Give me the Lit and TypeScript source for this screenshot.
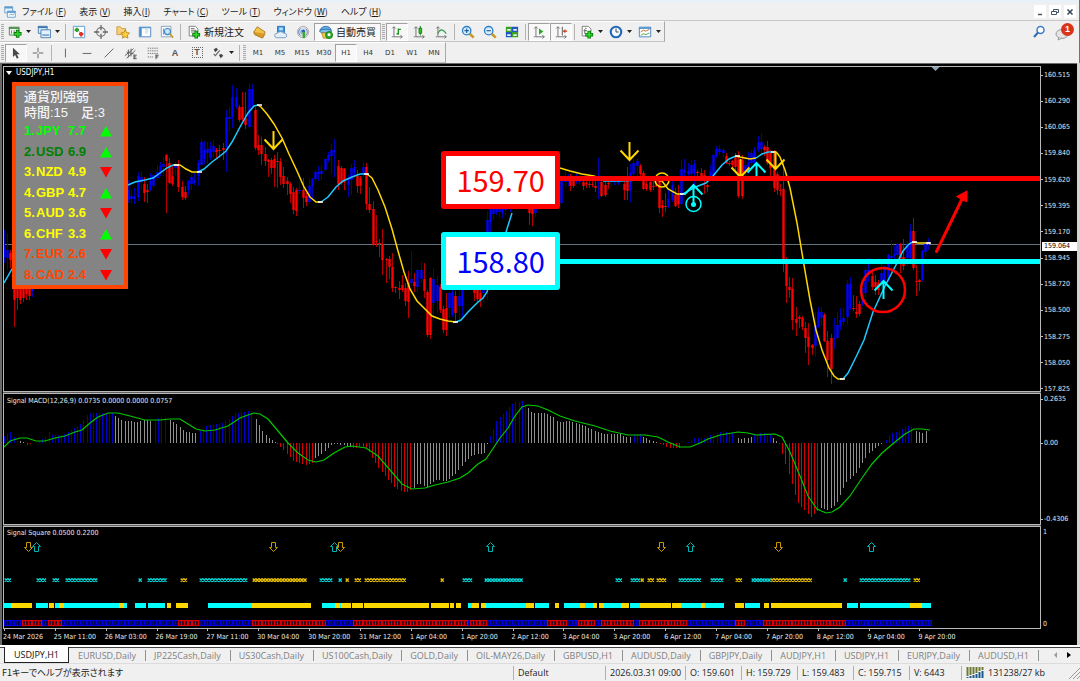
import { LitElement, html, svg, css } from "lit";
import { customElement, state } from "lit/decorators.js";
import { classMap } from "lit/directives/class-map.js";

type Point = [number, number];

/* ---------- price chart data: side, x, high, body top, body bottom, low ---------- */
const CANDLES = `
b4 230 246 257 263;b7 233 250 258 270;r10 250 253 260 268;r14 282 284 300 327;r17 282 284 298 310;r20 284 286 300 304;
r23 283 286 298 302;r26 282 285 294 300;r29 284 286 296 300;b32 280 284 291 297;
b128 180 190 200 203;b131 190 196 199 203;b134 188 196 199 204;b138 172 176 197 201;b141 171 177 182 190;r144 177 184 193 202;
r147 184 190 192 203;b150 173 181 190 191;b153 174 175 186 188;b157 165 172 178 180;b160 162 166 172 176;b163 157 164 167 176;
r166 154 155 161 213;r169 158 163 183 184;r172 165 176 184 186;b175 162 165 168 176;r178 160 165 187 192;r182 181 187 197 200;
r185 186 192 198 200;b188 180 181 190 195;b191 175 177 184 190;b194 173 180 183 185;b198 160 163 176 186;b201 139 142 165 166;
b204 141 150 159 164;b207 142 149 153 164;b210 142 149 158 160;b213 140 146 152 158;r216 148 150 152 158;r219 145 150 151 158;
r223 143 148 150 160;b226 110 117 147 172;b229 107 117 119 131;b232 85 97 117 128;b236 88 97 107 109;r239 105 107 120 122;
r242 92 107 119 121;r245 92 118 125 129;b249 83 89 127 128;b252 84 89 105 107;r255 107 110 148 150;r258 135 145 150 155;
r261 137 145 154 165;r265 147 154 161 166;r268 159 160 162 177;r271 158 160 168 174;r274 155 159 168 187;r277 152 161 162 188;
r280 158 162 177 185;r283 167 176 184 188;r287 177 181 184 195;r290 182 184 194 203;r293 187 192 210 214;r296 188 190 211 216;
b299 181 190 191 194;r303 178 190 198 208;r306 193 196 202 206;b309 178 186 202 204;b312 178 179 186 200;b315 170 172 179 181;
b318 166 172 174 181;b321 165 171 174 180;b325 158 159 170 171;b328 152 155 160 162;b331 144 150 156 174;b334 139 150 152 177;
r338 160 166 184 190;r341 166 168 183 185;r344 168 169 182 190;b348 175 178 185 197;b351 164 168 180 195;b354 160 167 173 176;
r357 170 176 186 193;r360 176 178 186 194;b363 162 167 175 177;r366 163 167 204 210;r369 187 204 210 213;r373 201 209 245 246;
r376 215 241 242 247;r379 239 243 244 257;r382 229 244 260 275;r386 258 259 260 283;r389 256 259 267 279;r392 253 267 288 292;
r395 286 287 288 293;r399 281 288 290 299;r402 275 285 290 292;r405 283 288 301 306;r408 271 282 302 318;b411 251 279 283 286;
r414 273 282 286 292;b417 269 270 287 292;b421 261 270 279 282;r424 263 279 291 298;r427 290 292 335 337;r430 277 278 335 339;
b433 268 279 303 321;b437 276 285 301 313;r440 284 287 310 313;r443 306 309 330 333;r446 293 308 330 336;b449 291 293 308 318;
b452 289 292 315 317;r455 291 296 313 321;b459 290 296 306 320;b462 285 290 306 317;r474 285 287 293 301;r477 285 290 299 302;
r480 288 293 300 307;b483 285 288 293 302;b487 211 220 290 300;b490 200 205 222 236;b493 200 205 214 220;b496 200 205 212 215;
b499 200 205 212 217;b502 200 205 213 218;b505 200 205 210 215;b510 200 204 208 212;r529 200 206 213 225;r532 203 209 214 226;b535 200 205 213 217;
b561 175 180 203 204;b565 172 177 182 187;b568 174 179 181 186;r570 174 180 186 191;r573 178 180 186 188;b576 172 176 181 184;
b579 175 180 182 185;r583 177 182 186 190;r586 180 183 184 188;r589 178 184 185 188;r592 180 184 185 187;r595 181 186 188 192;
b598 158 182 183 199;r601 178 182 196 197;r605 180 185 195 197;r608 178 183 184 189;b611 176 181 182 186;b614 177 180 182 185;
b618 176 180 183 185;r624 178 184 190 200;r627 167 180 191 200;b630 164 173 190 202;b633 159 163 174 177;b637 159 161 166 176;
r640 164 166 174 176;r643 171 173 189 190;r646 178 184 189 191;r650 180 182 190 192;r653 178 186 187 190;r656 180 184 186 187;
r659 176 180 208 213;r662 200 205 208 217;r665 193 206 207 212;b668 190 199 206 208;b672 176 185 200 202;r675 188 195 206 207;
r678 185 195 204 208;b681 160 169 204 205;b684 159 170 173 176;b688 163 171 174 177;b691 160 165 174 182;b694 160 164 173 186;
r697 170 172 173 178;r701 168 173 176 178;r704 170 175 176 194;r707 184 185 187 192;b710 165 172 176 181;b713 154 155 176 177;
b716 146 149 156 158;b719 145 149 152 155;b723 148 150 153 158;r726 153 156 163 164;r729 161 163 164 166;r732 160 161 165 168;
r735 153 156 167 172;r738 151 160 196 198;r742 155 160 196 199;b745 160 165 172 176;b748 152 162 168 174;b751 150 153 163 166;
b754 147 150 162 164;b758 136 142 150 152;b761 133 142 149 155;r764 145 147 150 156;r767 141 147 163 165;r770 150 153 168 178;
r774 150 152 188 192;r777 172 174 190 195;r780 184 190 191 196;r783 160 189 264 272;r786 257 261 286 303;r789 277 287 290 298;
r792 278 289 320 330;r796 307 319 323 336;r799 315 317 319 328;r802 316 318 327 330;r805 322 328 338 353;r808 323 337 347 365;
r812 344 345 348 355;b815 312 325 346 357;b818 307 312 326 328;b821 307 312 318 326;r824 313 315 341 342;r827 331 341 360 377;
r831 334 338 369 384;b834 318 338 339 349;b837 312 325 338 340;b840 308 320 326 330;b843 308 318 322 325;b847 280 284 317 324;
b850 277 284 308 310;r853 295 308 309 311;r856 296 312 314 318;r859 301 304 314 316;b862 288 296 304 306;b865 268 270 293 297;
b868 258 270 275 282;r872 270 276 287 290;r875 275 282 287 295;r878 280 283 290 295;b881 264 273 282 290;b884 266 267 282 284;
b888 254 255 280 282;b891 240 256 258 272;b894 246 254 256 262;b897 243 244 255 262;r900 243 244 258 273;r903 239 257 266 270;
b907 241 244 258 266;b910 224 231 258 262;r913 218 231 268 270;r916 265 281 282 296;r919 279 280 282 291;b922 250 251 280 281;
b925 242 243 252 257;b928 238 243 244 250`
  .trim()
  .split(/;\s*/)
  .map((row) => {
    const [x, high, top, bottom, low] = row.slice(1).split(" ").map(Number);
    return { up: row[0] === "b", x, high, top, bottom, low };
  });

/* ---------- trend line: rising parts are blue, falling parts are gold ---------- */
const TREND: [string, string][] = [
  ["rise", "4,283 12,269 20,262"],
  ["rise", "128,185 135,182 145,180 153,178 160,173 167,168 173,165"],
  ["fall", "173,165 180,165 186,169 192,172 198,172"],
  ["rise", "198,172 204,169 212,162 220,156 226,151 232,142 240,127 248,113 254,106 258,105"],
  ["fall", "258,105 261,107 267,114 274,124 282,138 289,154 297,171 304,187 310,197 316,202 321,202"],
  ["rise", "321,202 328,197 336,187 343,181 352,177 360,174 367,174"],
  ["fall", "367,174 372,178 378,190 385,207 392,229 398,251 404,272 410,289 417,301 424,308 432,316 440,319 448,321 456,322"],
  ["rise", "456,322 461,320 468,312 477,303 483,298 487,292 497,262 506,232 512,213"],
  ["fall", "540,160 560,168 570,171 582,174 594,176 603,180"],
  ["rise", "603,181 620,181 640,180 648,178 655,180"],
  ["fall", "655,180 662,181 668,189 677,194 683,194"],
  ["rise", "683,194 690,190 698,186 706,183 713,176 722,165 729,159 736,156"],
  ["fall", "736,156 740,157 750,159 756,158"],
  ["rise", "756,158 762,154 768,152 774,152"],
  ["fall", "774,152 777,153 780,157 785,170 790,188 797,223 804,265 810,300 816,330 822,350 829,368 834,376 838,379 843,379"],
  ["rise", "843,379 848,373 856,357 864,340 873,312 885,286 897,263 903,251 909,244 913,242"],
  ["fall", "913,242 918,243 930,243"],
];
const TURNS: Point[] = [[176, 165], [199, 172], [259, 105], [320, 202], [366, 174], [455, 322], [682, 194], [737, 156], [773, 152], [842, 379], [914, 242], [928, 243]];

/* ---------- MACD histogram: colour, then x,y outline ---------- */
const ZERO = 443;
const HISTOGRAM: [string, string][] = [
  ["up", "4,436 7,434 10,432 13,436 17,441"],
  ["flat", "20,441 24,442"],
  ["down", "27,445 32,444"],
  ["up", "39,441 45,438 48,432 52,435 62,435 70,431 80,424 87,415 90,413 112,413"],
  ["flat", "115,416 121,420 135,422 145,420 152,421"],
  ["up", "155,421 160,417 167,417"],
  ["flat", "170,420 178,425 185,432 197,433"],
  ["up", "200,431 208,425 220,424 230,418 235,413 250,411 253,412"],
  ["flat", "256,419 262,431 268,438 275,442"],
  ["down", "277,444 285,452 293,461 306,465 312,463"],
  ["flat", "315,458 322,454 330,445 335,444 345,445 350,447"],
  ["down", "353,448 362,447 368,450 373,460 383,474 395,488 405,493 411,490"],
  ["flat", "414,488 418,483 426,487 436,480 446,481 456,473 462,466 470,456 478,454 484,453 487,444"],
  ["up", "490,436 497,420 505,412 513,403 522,401 526,406"],
  ["flat", "528,408 532,413 545,413 553,417 558,422 570,421 578,424 585,426 597,432 605,434 620,434 628,438 631,437"],
  ["up", "634,435 640,434"],
  ["flat", "643,437 652,441 657,442"],
  ["down", "660,444 670,448 680,448"],
  ["up", "688,442 695,438 705,438 712,434 722,431 735,433"],
  ["flat", "738,438 742,439 751,437"],
  ["up", "754,434 762,433 770,434"],
  ["flat", "773,438 777,442"],
  ["down", "779,444 783,457 790,478 797,502 803,509 811,517 818,510"],
  ["flat", "821,508 828,510 836,504 846,482 855,474 862,463 868,454 875,448 882,444"],
  ["up", "886,440 890,434 900,430 910,425 913,428"],
  ["flat", "916,431 922,433 928,430"],
];
const MACD_SIGNAL =
  "4,447 10,441 20,438 27,438 36,441 45,441 55,438 65,436 75,432 82,430 90,423 98,417 108,413 118,413 130,416 145,420 160,420 170,419 180,419 188,424 196,429 205,431 215,430 228,426 240,418 248,415 254,413 260,414 268,419 278,431 288,443 298,453 308,460 316,462 324,460 334,453 345,447 352,446 366,448 378,456 390,470 402,484 412,489 425,488 435,485 448,482 460,478 468,473 478,464 486,459 492,450 500,438 508,428 515,416 522,407 528,405 538,406 548,410 560,416 575,421 595,426 610,431 628,435 645,435 658,437 668,442 680,447 690,447 700,443 708,439 720,435 738,432 748,433 756,435 775,434 782,437 790,452 800,476 808,496 817,509 826,513 832,512 840,507 850,496 862,478 872,464 882,453 895,442 905,434 914,429 922,429 930,430";

const parse = (text: string): Point[] => text.split(" ").map((p) => p.split(",").map(Number) as Point);

const STEP = 3.175;
const histogramBars = HISTOGRAM.flatMap(([kind, text]) => {
  const pts = parse(text);
  const bars: { kind: string; x: number; y: number }[] = [];
  const end = pts[pts.length - 1][0];
  for (let x = pts[0][0]; x <= end + 0.5; x += STEP) {
    let i = 0;
    while (i < pts.length - 2 && pts[i + 1][0] < x) i++;
    const [x0, y0] = pts[i];
    const [x1, y1] = pts[i + 1];
    const t = Math.min(1, (x - x0) / (x1 - x0));
    bars.push({ kind, x: Math.round(x), y: Math.round(y0 + (y1 - y0) * t) });
  }
  return bars;
});

/* ---------- signal square rows ---------- */
const runs = (text: string) =>
  text.split(" ").map((r) => {
    const [from, to] = r.slice(1).split("-").map(Number);
    return { kind: r[0], from, to: to ?? from };
  });
const CROSSES = runs(
  "c6-9 c38-47 c54-57 c67-98 c140 c149-165 y182-185 c201-248 y254-306 c321-333 c340 y347 y356-360 y366-404 y442 c464-471 c486-522 c617-620 c632-639 y642 y649-652 y658-665 c680-699 c712-722 y737-741 c753-769 y772-811 c845 c861-909 y915-919",
);
const BANDS = runs(
  "c4-11 y11-32 c36-48 y49-54 c55-59 y59-64 c64-119 y119-124 c124-127 c135-146 c148-165 y167-171 y176-188 c208-252 y252-311 c322-335 y335-340 c340-341 y341-351 y352-363 y364-429 y431-449 y450-454 y456-461 c468-472 y472-479 y481-486 c486-526 y526-534 c535-549 y555-559 c564-580 y580-585 c585-593 y593-597 y599-604 c604-621 y621-629 c630-640 y640-671 y672-681 c681-701 y701-705 c705-724 y735-744 c745-760 y764-769 y771-842 c847-858 c860-910 y910-922 c922-931",
);
const RED_CELLS = runs(
  "r22-39 r48-59 r178-189 r192-199 r252-325 r353-466 r470-485 r547-567 r578-593 r601-615 r617-631 r639-685 r735-745 r763-844",
);
const SIGNALS: [string, number][] = [["y", 28], ["c", 36], ["y", 273], ["c", 334], ["y", 340], ["c", 490], ["y", 661], ["c", 690], ["y", 778], ["c", 871]];

const PRICES = ["160.515", "160.290", "160.065", "159.840", "159.620", "159.395", "159.170", "158.945", "158.720", "158.500", "158.275", "158.050", "157.825"];
const TIMES = ["24 Mar 2026", "25 Mar 11:00", "26 Mar 03:00", "26 Mar 19:00", "27 Mar 11:00", "30 Mar 04:00", "30 Mar 20:00", "31 Mar 12:00", "1 Apr 04:00", "1 Apr 20:00", "2 Apr 12:00", "3 Apr 04:00", "3 Apr 20:00", "6 Apr 12:00", "7 Apr 04:00", "7 Apr 20:00", "8 Apr 12:00", "9 Apr 04:00", "9 Apr 20:00"];
const STRENGTH: [string, string, string, boolean][] = [
  ["JPY", "7.7", "s1", true],
  ["USD", "6.9", "s2", true],
  ["NZD", "4.9", "s3", false],
  ["GBP", "4.7", "s3", true],
  ["AUD", "3.6", "s3", false],
  ["CHF", "3.3", "s3", true],
  ["EUR", "2.6", "s4", false],
  ["CAD", "2.4", "s4", false],
];

@customElement("price-pane")
class PricePane extends LitElement {
  static styles = css`
    :host { display: flex; min-height: 0; }
    .plot { flex: 1; position: relative; min-width: 0; border: 1px solid #b8b8b8; border-bottom: 0; box-sizing: border-box; color: #fff; }
    svg.canvas { position: absolute; inset: 0; width: 100%; height: 100%; }
    .title { position: relative; display: flex; align-items: center; gap: 4px; padding-left: 2px; font-size: 8px; line-height: 12px; }
    .title svg { width: 6px; height: 4px; }
    .axis { width: 36px; position: relative; }
    .scale { display: flex; flex-direction: column; justify-content: space-between; position: absolute; inset: 4px 0 -3px 0; margin: 0; padding: 0; list-style: none; }
    .scale li { display: flex; align-items: center; height: 10px; gap: 1px; font-size: 7px; line-height: 10px; }
    .scale li::before { content: ""; width: 2px; height: 1px; background: #c0c0c0; }
    .now { position: absolute; left: 1px; right: 0; top: 54%; height: 9px; font-size: 7px; line-height: 9px; padding-left: 2px; background: #fff; color: #000; }
    .level { position: absolute; left: 42.2%; width: 119px; height: 58px; box-sizing: border-box; display: flex; align-items: center; justify-content: center; background: #fff; border: 5px solid; border-radius: 3px; font: 29px/44px "Noto Sans CJK JP", sans-serif; padding-bottom: 2px; }
    .resistance { top: 26%; border-color: #f00; color: #f00; }
    .support { top: 50.9%; border-color: #0ff; }
    .support span { color: #00f; }
    .strength { position: absolute; left: 8px; top: 15px; width: 116px; height: 207px; box-sizing: border-box; border: 4px solid #ff4500; background: #848484; padding-top: 3px; display: flex; flex-direction: column; }
    .strength p { margin: 0 0 0 8px; font: 500 13px/16px "Liberation Sans", "Noto Sans CJK JP", sans-serif; color: #f4f4f4; white-space: pre; }
    .strength ol { flex: 1; list-style: none; margin: 0; padding: 0; display: flex; flex-direction: column; font: bold 13px/20px "Liberation Sans", sans-serif; }
    .strength li { flex: 1; display: grid; grid-template-columns: 12px 32px 32px 12px; padding-left: 8px; align-items: center; }
    .strength svg { width: 12px; height: 12px; }
    .s1 { color: #0f0; } .s2 { color: #008000; } .s3 { color: #ff0; } .s4 { color: #ff4500; }
    .rise { fill: none; stroke: #1ec8ff; stroke-width: 1.5; }
    .fall { fill: none; stroke: #ffd700; stroke-width: 1.5; }
    .upbar { fill: #00f; } .upwick { fill: #0000b0; }
    .dnbar { fill: #f00; } .dnwick { fill: #b40000; }
  `;
  private arrow(x: number, tip: number, up: boolean) {
    const d = up ? 1 : -1;
    return svg`<path d="M${x} ${tip + 18 * d}V${tip}M${x - 9} ${tip + 9.5 * d}L${x} ${tip}L${x + 9} ${tip + 9.5 * d}" fill="none" stroke=${up ? "#0ff" : "#ffd700"} stroke-width="2"/>`;
  }
  render() {
    return html`
      <div class="plot">
        <svg class="canvas" viewBox="4 67 1036 324" preserveAspectRatio="none" aria-hidden="true">
          <path d="M4 244.5H1040" stroke="#5f7480" />
          ${CANDLES.map((c) => svg`
            <rect class=${c.up ? "upwick" : "dnwick"} x=${c.x} y=${c.high} width="1" height=${c.low - c.high} />
            <rect class=${c.up ? "upbar" : "dnbar"} x=${c.x - 0.7} y=${c.top} width="2.4" height=${Math.max(1, c.bottom - c.top)} />`)}
          ${TREND.map(([kind, pts]) => svg`<polyline class=${kind} points=${pts} />`)}
          ${TURNS.map(([x, y]) => svg`<path d="M${x - 2} ${y}h5" stroke="#fff" stroke-width="1.5"/>`)}
          ${this.arrow(273.5, 149, false)} ${this.arrow(629.5, 160, false)} ${this.arrow(740.5, 177, false)}
          ${this.arrow(775.5, 169, false)} ${this.arrow(756.5, 163, true)} ${this.arrow(693.5, 185, true)} ${this.arrow(883.5, 281, true)}
          <circle cx="662" cy="180" r="7" fill="none" stroke="#ffd700" stroke-width="1.5" />
          <circle cx="693.5" cy="204" r="7.5" fill="none" stroke="#0ff" stroke-width="1.5" />
          <circle cx="693.5" cy="204.5" r="2.5" fill="#0ff" />
          <path d="M555 178.5H1040" stroke="#f00" stroke-width="5" />
          <path d="M555 261.5H1040" stroke="#0ff" stroke-width="5" />
          <circle cx="883" cy="290" r="22" fill="none" stroke="#f00" stroke-width="2.5" />
          <path d="M936.5 251.5L963 197" stroke="#f00" stroke-width="3" stroke-linecap="round" />
          <path d="M967 191L956.500 196.500L960 198.500L964.500 201L967 201.500Z" fill="#f00" stroke="#f00" />
          <path d="M931.500 67H939.500L935.500 71Z" fill="#8fa5b5" />
        </svg>
        <div class="title"><svg viewBox="0 0 6 4"><path d="M0 0H6L3 4Z" fill="#fff" /></svg>USDJPY,H1</div>
        <div class="level resistance"><span>159.70</span></div>
        <div class="level support"><span>158.80</span></div>
        <section class="strength">
          <p>通貨別強弱</p>
          <p>時間:15　足:3</p>
          <ol>
            ${STRENGTH.map(([name, value, tone, up], i) => html`<li class=${tone}>
              <span>${i + 1}.</span><span>${name}</span><span>${value}</span>
              <svg viewBox="0 0 12 12"><path d=${up ? "M0 11.500H12L6 1Z" : "M0 1H12L6 11.500Z"} fill=${up ? "#0f0" : "#f00"} /></svg>
            </li>`)}
          </ol>
        </section>
      </div>
      <div class="axis">
        <ul class="scale">${PRICES.map((p) => html`<li>${p}</li>`)}</ul>
        <div class="now">159.064</div>
      </div>`;
  }
}

@customElement("macd-pane")
class MacdPane extends LitElement {
  static styles = css`
    :host { display: flex; min-height: 0; font-size: 7px; line-height: 10px; }
    .plot { flex: 1; position: relative; min-width: 0; border: solid #b8b8b8; border-width: 0 1px; box-sizing: border-box; }
    svg { position: absolute; inset: 0; width: 100%; height: 100%; }
    .title { position: relative; padding: 2px 3px; }
    .scale { width: 36px; margin: 0; padding: 0; list-style: none; display: flex; flex-direction: column; box-sizing: border-box; }
    .scale li { display: flex; align-items: center; height: 10px; gap: 1px; }
    .scale li::before { content: ""; width: 2px; height: 1px; background: #c0c0c0; }
    .scale .top { flex: 34 0 10px; align-items: flex-start; }
    .scale .zero { flex: 66 0 10px; align-items: flex-start; }
    .scale .top::before, .scale .zero::before { margin-top: 5px; }
    .up { fill: #0000c8; } .down { fill: #d20000; } .flat { fill: #909090; }
  `;
  render() {
    return html`
      <div class="plot">
        <svg viewBox="4 394 1036 130" preserveAspectRatio="none" aria-hidden="true">
          <g shape-rendering="crispEdges">
            ${histogramBars.map((b) => svg`<rect class=${b.kind} x=${b.x} width="1" y=${Math.min(b.y, ZERO)} height=${Math.max(1, Math.abs(b.y - ZERO))} />`)}
          </g>
          <polyline points=${MACD_SIGNAL} fill="none" stroke="#00c800" stroke-width="1.2" />
        </svg>
        <div class="title">Signal MACD(12,26,9) 0.0735 0.0000 0.0000 0.0757</div>
      </div>
      <ul class="scale"><li class="top">0.2635</li><li class="zero">0.00</li><li>-0.4306</li></ul>`;
  }
}

@customElement("square-pane")
class SquarePane extends LitElement {
  static styles = css`
    :host { display: flex; min-height: 0; font-size: 7px; line-height: 10px; }
    .plot { flex: 1; position: relative; min-width: 0; border: solid #b8b8b8; border-width: 0 1px 1px; box-sizing: border-box; }
    svg { position: absolute; inset: 0; width: 100%; height: 100%; }
    .title { position: relative; padding: 1px 3px; }
    .scale { width: 34px; padding: 0 0 0 2px; margin: 0; list-style: none; display: flex; flex-direction: column; justify-content: space-between; }
    .c { fill: #0ff; } .y { fill: #ffd700; }
    .xc { stroke: #00d8d8; stroke-width: 1.3; } .xy { stroke: #e8c000; stroke-width: 1.3; }
    .ac { stroke: #00b4b4; } .ay { stroke: #c89a00; }
  `;
  private cells(from: number, to: number, edge: string, fill: string) {
    const out = [];
    for (let x = from; x < to - 1; x += STEP)
      out.push(svg`<rect x=${Math.round(x) + 0.5} y="620.5" width="3" height="5" fill=${fill} stroke=${edge}/><path d="M${Math.round(x) + 1.5} 622.5h1" stroke="#000a50"/>`);
    return out;
  }
  render() {
    return html`
      <div class="plot">
        <svg viewBox="4 527 1036 101" preserveAspectRatio="none" aria-hidden="true">
          ${SIGNALS.map(([k, x]) => k === "y"
            ? svg`<path class="ay" fill="none" d="M${x - 1.5} 542.500h4v5h2l-4 4l-4 -4h2z"/>`
            : svg`<path class="ac" fill="none" d="M${x - 1.5} 551.500h4v-5h2l-4 -4l-4 4h2z"/>`)}
          ${CROSSES.map((r) => {
            let d = "";
            for (let x = r.from; x <= r.to + 0.5; x += STEP) d += `M${x - 1.3} 578.500l3 3.200m0 -3.200l-3 3.200`;
            return svg`<path class=${"x" + r.kind} fill="none" d=${d} />`;
          })}
          ${BANDS.map((r) => svg`<rect class=${r.kind} x=${r.from} y="603" width=${r.to - r.from} height="5" />`)}
          <g shape-rendering="crispEdges">
            ${this.cells(4, 931, "#0000e0", "#000060")}
            ${RED_CELLS.map((r) => this.cells(r.from, r.to, "#d80000", "#500010"))}
          </g>
        </svg>
        <div class="title">Signal Square 0.0500 0.2200</div>
      </div>
      <ul class="scale"><li>1</li><li>0</li></ul>`;
  }
}

/* ---------- toolbar icons, 16 x 16 ---------- */
const axes = svg`<path d="M4.500 2V13.500H14M2.500 4L4.500 2L6.500 4M12 11.500L14 13.500L12 15.500M2 13.500H4" fill="none" stroke="#666"/>`;
const plus = (x: number, y: number) => svg`<path d="M${x} ${y - 4.500}v9M${x - 4.500} ${y}h9" stroke="#067a06" stroke-width="4"/><path d="M${x} ${y - 3.500}v7M${x - 3.500} ${y}h7" stroke="#2fd42f" stroke-width="2"/>`;
const lens = (mark: unknown) => svg`<path d="M10 10L14.500 14.500" stroke="#c89a2a" stroke-width="3"/><circle cx="6.500" cy="6.500" r="4.800" fill="#d6ecfa" stroke="#2f7fc4" stroke-width="1.500"/>${mark}`;
const ICONS: Record<string, unknown> = {
  app: svg`<path d="M2 2h9v7H2z" fill="#e8f3fc" stroke="#5a9bd0"/><path d="M2 3h9" stroke="#5a9bd0" stroke-width="2"/><path d="M5 7h9v7H5z" fill="#fff" stroke="#5a9bd0"/><path d="M5 8h9" stroke="#5a9bd0" stroke-width="2"/><path d="M7 12l2-2 1.500 1.500L13 10" fill="none" stroke="#5a9bd0"/>`,
  newChart: svg`<path d="M1.500 2.500h11v9h-11z" fill="#eef6ee" stroke="#4b7d4b"/><path d="M1 3.500h12" stroke="#4f8f4f" stroke-width="2"/><path d="M4 6v4M7 6v3" stroke="#777"/>${plus(11, 10)}`,
  profiles: svg`<path d="M1.500 1.500h10v8h-10z" fill="#dcebf7" stroke="#3f78b0"/><path d="M1 2.500h11" stroke="#3f78b0" stroke-width="2"/><path d="M4.500 5.500h11v9h-11z" fill="#e4f0fa" stroke="#3f78b0"/><path d="M6 11.500h8" stroke="#7ba8d0" stroke-width="2"/>`,
  market: svg`<path d="M1.500 1.500h13v13h-13z" fill="#fff" stroke="#4f96d0"/><path d="M5.500 3v5M3 5.500h5" stroke="#2aa52a" stroke-width="2.500"/><path d="M7 6l3 4" stroke="#888"/><path d="M10.500 8v5M8 10.500h5" stroke="#e03020" stroke-width="2.500"/>`,
  target: svg`<circle cx="8" cy="8" r="5" fill="none" stroke="#777" stroke-width="1.300"/><path d="M8 0v6M8 10v6M0 8h6M10 8h6" stroke="#666" stroke-width="1.500"/>`,
  favorite: svg`<path d="M1 2h4l1.500 2H11v7H1z" fill="#f6cf7a" stroke="#c9983a"/><path d="M10.500 5.500l1.600 3.200 3.400.5-2.500 2.400.6 3.400-3.100-1.600-3.100 1.600.6-3.400L5.500 9.200l3.400-.5z" fill="#fbd23c" stroke="#bb8514"/>`,
  navigator: svg`<path d="M1.500 2.500h13v11h-13z" fill="#fff" stroke="#3f7fc0"/><path d="M2 3h12" stroke="#5b9bd8" stroke-width="1.500"/><path d="M3 3v10" stroke="#4b8fd0" stroke-width="2.500"/><path d="M8 5h4M8 7h4M8 9h3" stroke="#ccc"/>`,
  tester: svg`<path d="M1.500 1.500h11v12h-11z" fill="#f4f8fb" stroke="#7ea0bf"/><path d="M4 4v7M7 4v3" stroke="#889"/><circle cx="8.500" cy="7.500" r="3.500" fill="#cfe6f8" stroke="#3f88c8" stroke-width="1.300"/><path d="M11 10l4 4.500" stroke="#c89a2a" stroke-width="2"/>`,
  order: svg`<path d="M2.500 1.500h7l3 3v8h-10z" fill="#fff" stroke="#777"/><path d="M4.500 4h4M4.500 6h6M4.500 8h4" stroke="#666"/>${plus(10.5, 11)}`,
  gold: svg`<path d="M2 8l4-6 9 6-3 5z" fill="#f2c34a" stroke="#a8761a"/><path d="M2 8l1 3 9 4 3-5" fill="#d99b28" stroke="#a8761a"/>`,
  cloud: svg`<path d="M4 1.500h8v7H4z" fill="#3f96e0" stroke="#2a6fb8"/><path d="M6 3h4v3H6z" fill="#bfe0fa"/><path d="M3 14.500a2.500 2.500 0 0 1 .5-5 4.500 3.500 0 0 1 8 0 2.500 2.500 0 0 1 1 5z" fill="#e4eef8" stroke="#6f98c0"/>`,
  radio: svg`<circle cx="8" cy="8" r="6.500" fill="#dcdfe4" stroke="#aab"/><path d="M5 12a5 5 0 0 1 0-8M7 10.500a3 3 0 0 1 0-5" fill="none" stroke="#4a7fb8"/><path d="M11 4a5 5 0 0 1 0 8" fill="none" stroke="#889"/><circle cx="8.500" cy="7" r="1.800" fill="#1f66c0"/><path d="M9 8v7" stroke="#3ba83b" stroke-width="3"/>`,
  auto: svg`<path d="M1 6c2-6 12-6 13 0z" fill="#62a8dc" stroke="#2f74ac"/><ellipse cx="7.500" cy="7" rx="7" ry="2" fill="#82c0ec" stroke="#2f74ac"/><path d="M3 9h9l-2 6H5z" fill="#f2cb5a" stroke="#b98c20"/><circle cx="11.500" cy="11.500" r="4" fill="#2fae2f" stroke="#0d7a0d"/><path d="M10 9.500h3v3h-3z" fill="#fff"/>`,
  bars: svg`${axes}<path d="M9.500 4v7M9.500 5h3M7.500 10h2" stroke="#1c961c" stroke-width="1.500"/>`,
  candles: svg`${axes}<path d="M9.500 1v11" stroke="#157a15"/><path d="M8 3.500h3v6H8z" fill="#27c527" stroke="#157a15"/>`,
  line: svg`${axes}<path d="M4 10c3-6 6-6 10 0" fill="none" stroke="#3a9a4a" stroke-width="1.300"/>`,
  zoomIn: lens(svg`<path d="M4 6.500h5M6.500 4v5" stroke="#2060a0" stroke-width="1.300"/>`),
  zoomOut: lens(svg`<path d="M4 6.500h5" stroke="#2060a0" stroke-width="1.300"/>`),
  tile: svg`<path d="M1 2h7v6H1zM8 8h7v6H8z" fill="#3aa020"/><path d="M8 2h7v6H8zM1 8h7v6H1z" fill="#2058c0"/><path d="M2.500 4.500h4v2h-4zM9.500 4.500h4v2h-4zM2.500 10.500h4v2h-4zM9.500 10.500h4v2h-4z" fill="#e8f0f8"/>`,
  scroll: svg`${axes}<path d="M8 4v7l5-3.500z" fill="#27a827"/>`,
  shift: svg`${axes}<path d="M9.500 2v10" stroke="#444"/><path d="M10 7l3-2.500v1.700h2v1.600h-2v1.700z" fill="#c0401c"/>`,
  indicators: svg`<path d="M2.500 1.500h7l3 3v8h-10z" fill="#fff" stroke="#777"/><path d="M7.500 4c-2-1-2 1-2 2v4M4 6.500h4" fill="none" stroke="#555"/>${plus(10.5, 11)}`,
  clock: svg`<circle cx="8" cy="8" r="6" fill="#f4f9ff" stroke="#2368b8" stroke-width="2.400"/><path d="M8 4v4h3" fill="none" stroke="#333"/>`,
  template: svg`<path d="M1.500 2.500h13v11h-13z" fill="#fff" stroke="#3f7fb8"/><path d="M1 3.500h14" stroke="#5596cf" stroke-width="2"/><path d="M3 8l3-2 3 1 4-2" fill="none" stroke="#b06030"/><path d="M3 12l3-2 3 1 4-2" fill="none" stroke="#3f9a3f"/>`,
  cursor: svg`<path d="M4.500 2v10.500l2.500-2.300 2 4.300 2-1-2-4h3.500z" fill="#4a4a4a"/>`,
  cross: svg`<path d="M8 2v5M8 9v5M2 8h5M9 8h5" stroke="#555"/>`,
  vline: svg`<path d="M8.500 3v10" stroke="#555"/>`,
  hline: svg`<path d="M3 8.500h10" stroke="#555"/>`,
  trend: svg`<path d="M3 13L13 3" stroke="#555"/>`,
  channel: svg`<path d="M1 11L11 3M3 14L13 5M5 4v9M8 3v9M3 7l8 2" stroke="#555"/><path d="M11 10.500h3.500M11 12.500h3M11 14.500h3.500M11.500 10v5" stroke="#444" fill="none"/>`,
  fibo: svg`<path d="M2 2.500h12M2 5.500h12M2 8.500h12M2 12.500h6" stroke="#666" stroke-dasharray="1.500 1"/><path d="M11.500 10v5M11 10.500h3.500M11 12.500h3" stroke="#444"/>`,
  shapes: svg`<path d="M3 4l3-2 2 2-3 3zM9 10l3-1 2 2-3 3z" fill="#444"/><path d="M3 9l2 2 5-6" fill="none" stroke="#666" stroke-width="1.300"/>`,
};
const icon = (name: string) => html`<svg class="icon" viewBox="0 0 16 16" aria-hidden="true">${ICONS[name]}</svg>`;
const caret = html`<svg class="caret" viewBox="0 0 5 3" aria-hidden="true"><path d="M0 0H5L2.500 3Z" fill="#222" /></svg>`;

@customElement("app-root")
class AppRoot extends LitElement {
  @state() private timeframe = "H1";
  @state() private tab = 0;

  static styles = css`
    :host { display: flex; flex-direction: column; height: 100vh; min-height: 480px; background: #f0f0f0; color: #1a1a1a; font: 9px/12px "Open Sans", "Noto Sans CJK JP", sans-serif; overflow: hidden; }
    button { font: inherit; color: inherit; background: none; border: 0; margin: 0; padding: 0; white-space: nowrap; }
    header { border-right: 1px solid #4a7ab5; }
    .menubar { display: flex; align-items: center; height: 21px; box-sizing: border-box; border-top: 3px solid #eaf0f8; border-bottom: 1px solid #c8c8c8; padding: 0 3px; }
    .menubar .icon { width: 14px; height: 14px; margin-right: 5px; }
    .menu { display: flex; gap: 13px; flex: 1; font-family: "Noto Sans CJK JP", sans-serif; font-feature-settings: "palt"; }
    .menu u { text-underline-offset: 1px; }
    .wins { display: flex; gap: 3px; }
    .wins button { width: 12px; height: 13px; background: #fff; display: grid; place-items: center; }
    .wins svg { width: 8px; height: 8px; }
    .row { display: flex; height: 21px; box-sizing: border-box; }
    .bar { display: flex; align-items: center; box-sizing: border-box; border: solid; border-width: 1px 1px 1px 0; border-color: #fff #a8a8a8 #c4c4c4; }
    .grip { width: 3px; height: 15px; margin: 0 1px; background: repeating-linear-gradient(#b0b0b0 0 1px, #e8e8e8 1px 2px); }
    .sep { width: 1px; height: 16px; margin: 0 2px; background: #b4b4b4; }
    .tool { display: flex; align-items: center; justify-content: center; width: 22px; height: 18px; box-sizing: border-box; }
    .tool .icon { width: 14px; height: 14px; flex: none; }
    .drop { width: 29px; gap: 4px; }
    .caret { width: 5px; height: 3px; flex: none; }
    .wide { width: auto; padding: 0 4px; gap: 3px; font-size: 10px; font-family: "Noto Sans CJK JP", sans-serif; }
    .on { background: #f8f8f8; border: 1px solid; border-color: #a0a0a0 #fff #fff #a0a0a0; }
    .wide.on { border-right-color: #b4b4b4; }
    .tf { font: 7px/12px "DejaVu Sans", sans-serif; color: #333; }
    .letter { font: bold 9px/12px "Liberation Sans", sans-serif; color: #555; }
    .box { border: 1px dotted #666; width: 9px; height: 9px; line-height: 9px; }
    .right { margin-left: auto; display: flex; gap: 8px; align-items: center; padding-right: 5px; }
    .right .find { width: 14px; height: 14px; }
    .right .chat { width: 20px; height: 18px; }
    .badge-button { position: relative; display: flex; }
    .badge { position: absolute; right: 0; top: 0; width: 13px; height: 13px; border-radius: 50%; background: #d8341a; color: #fff; font: bold 9px/13px "Liberation Sans", sans-serif; text-align: center; }
    .find-button { display: flex; }
    .chart { flex: 1; min-height: 0; display: flex; flex-direction: column; background: #000; color: #e8e8e8; font-family: "DejaVu Sans Condensed", "DejaVu Sans", sans-serif; border: solid #d4d4d4; border-width: 0 3px 0 0; padding: 3px 0 0 3px; box-shadow: inset 2px 1px 0 #6a6a6a; }
    price-pane { flex: 325 1 0; }
    macd-pane { flex: 130 1 0; }
    square-pane { flex: 102 1 0; }
    .split { height: 1px; margin-right: 36px; border: solid #b8b8b8; border-width: 1px 0; background: #606060; }
    .times { display: flex; height: 16px; margin: 0 36px 0 0; padding: 0; list-style: none; font-size: 7px; line-height: 12px; overflow: visible; }
    .times li { flex: 0 0 4.9%; white-space: nowrap; }
    .times li::before { content: ""; display: block; width: 1px; height: 2px; margin-left: 1px; background: #c0c0c0; }
    .tabs { display: flex; align-items: center; height: 19px; box-sizing: border-box; border-top: 2px solid #fff; border-bottom: 1px solid #dcdcdc; box-shadow: inset 0 1px 0 #404040; padding: 0 5px 0 4px; color: #808080; }
    .tabs button { padding: 0 9px 0 8px; border-right: 1px solid #909090; height: 11px; line-height: 11px; }
    .tabs .active { height: 16px; align-self: flex-start; background: #fff; color: #111; border: solid #222; border-width: 0 1px 1px; padding: 0 9px; line-height: 15px; margin-right: 1px; }
    .arrows { margin-left: auto; display: flex; gap: 2px; }
    .tabs .arrows button { border: 0; width: 12px; padding: 0; display: grid; place-items: center; }
    .arrows svg { width: 4px; height: 6px; }
    footer { display: flex; align-items: center; height: 17px; color: #222; }
    footer span { box-sizing: border-box; border-left: 1px solid #b0b0b0; padding-left: 4px; line-height: 14px; white-space: nowrap; }
    footer .help { flex: 1; border: 0; padding-left: 2px; min-width: 0; overflow: hidden; font-family: "Noto Sans CJK JP", sans-serif; font-feature-settings: "palt"; }
    .w92 { width: 92px; } .w80 { width: 80px; } .w56 { width: 56px; } .w52 { width: 52px; }
    footer .net { width: 119px; display: flex; align-items: center; gap: 3px; }
    .net .signal { width: 19px; height: 11px; }
    .net .size { margin-left: auto; width: 11px; height: 12px; }
  `;

  private tool(name: string, label: string, on = false, drop = false) {
    return html`<button class=${classMap({ tool: true, on, drop })} aria-label=${label}>${icon(name)}${drop ? caret : ""}</button>`;
  }

  render() {
    const menus: [string, string][] = [["ファイル ", "F"], ["表示 ", "V"], ["挿入", "I"], ["チャート ", "C"], ["ツール ", "T"], ["ウィンドウ ", "W"], ["ヘルプ ", "H"]];
    const frames = ["M1", "M5", "M15", "M30", "H1", "H4", "D1", "W1", "MN"];
    const tabs = ["USDJPY,H1", "EURUSD,Daily", "JP225Cash,Daily", "US30Cash,Daily", "US100Cash,Daily", "GOLD,Daily", "OIL-MAY26,Daily", "GBPUSD,H1", "AUDUSD,Daily", "GBPJPY,Daily", "AUDJPY,H1", "USDJPY,H1", "EURJPY,Daily", "AUDUSD,H1"];
    return html`
      <header>
        <div class="menubar">
          ${icon("app")}
          <nav class="menu">${menus.map(([t, k]) => html`<button>${t}(<u>${k}</u>)</button>`)}</nav>
          <div class="wins">
            <button aria-label="最小化"><svg viewBox="0 0 8 8"><path d="M2 6.500h4" stroke="#456" stroke-width="1.500" /></svg></button>
            <button aria-label="元に戻す"><svg viewBox="0 0 8 8"><path d="M2.500 3V1.500h5v3H6M.5 3.500h5v3h-5z" fill="none" stroke="#456" /></svg></button>
            <button aria-label="閉じる"><svg viewBox="0 0 8 8"><path d="M1.500 1.500l5 5M6.500 1.500l-5 5" stroke="#345" stroke-width="1.500" /></svg></button>
          </div>
        </div>
        <div class="row">
          <div class="bar">
            <i class="grip"></i>
            ${this.tool("newChart", "新規チャート", false, true)} ${this.tool("profiles", "組表示", false, true)}
            <i class="sep"></i>
            ${this.tool("market", "気配値表示")} ${this.tool("target", "データウィンドウ")} ${this.tool("favorite", "ナビゲーター")}
            ${this.tool("navigator", "ターミナル")} ${this.tool("tester", "ストラテジーテスター")}
            <i class="sep"></i>
            <button class="tool wide">${icon("order")}新規注文</button>
            ${this.tool("gold", "メタエディター")} ${this.tool("cloud", "クラウド")} ${this.tool("radio", "シグナル")}
            <button class="tool wide on">${icon("auto")}自動売買</button>
            <i class="grip"></i>
            ${this.tool("bars", "バーチャート", true)} ${this.tool("candles", "ローソク足")} ${this.tool("line", "ライン")}
            <i class="sep"></i>
            ${this.tool("zoomIn", "拡大")} ${this.tool("zoomOut", "縮小")} ${this.tool("tile", "整列")}
            <i class="sep"></i>
            ${this.tool("scroll", "自動スクロール", true)} ${this.tool("shift", "チャートシフト", true)}
            <i class="sep"></i>
            ${this.tool("indicators", "インディケータ", false, true)} ${this.tool("clock", "時間足", false, true)} ${this.tool("template", "定型チャート", false, true)}
          </div>
          <div class="right">
            <button class="find-button" aria-label="検索"><svg class="find" viewBox="0 0 14 14"><circle cx="8.500" cy="5" r="3.500" fill="#fff" stroke="#3a7cc8" stroke-width="1.500" /><path d="M6 7.500L2 12" stroke="#2f6cb4" stroke-width="2" /></svg></button>
            <button class="badge-button" aria-label="通知">
              <svg class="chat" viewBox="0 0 20 18"><ellipse cx="8" cy="11" rx="6" ry="4.500" fill="#e4e4e4" stroke="#999" /><path d="M5 14l-1 3 4-2" fill="#e4e4e4" stroke="#999" /></svg>
              <span class="badge">1</span>
            </button>
          </div>
        </div>
        <div class="row">
          <div class="bar">
            <i class="grip"></i>
            ${this.tool("cursor", "カーソル", true)} ${this.tool("cross", "クロスヘア")}
            <i class="sep"></i>
            ${this.tool("vline", "垂直線")} ${this.tool("hline", "水平線")} ${this.tool("trend", "トレンドライン")} ${this.tool("channel", "チャネル")}
            ${this.tool("fibo", "フィボナッチ")}
            <button class="tool letter">A</button>
            <button class="tool letter"><span class="box">T</span></button>
            ${this.tool("shapes", "矢印", false, true)}
            <i class="sep"></i><i class="grip"></i>
            ${frames.map((f) => html`<button class=${classMap({ tool: true, tf: true, on: f === this.timeframe })} @click=${() => (this.timeframe = f)}>${f}</button>`)}
          </div>
        </div>
      </header>
      <main class="chart">
        <price-pane></price-pane>
        <div class="split"></div>
        <macd-pane></macd-pane>
        <div class="split"></div>
        <square-pane></square-pane>
        <ul class="times">${TIMES.map((t) => html`<li>${t}</li>`)}</ul>
      </main>
      <nav class="tabs">
        ${tabs.map((t, i) => html`<button class=${classMap({ active: i === this.tab })} @click=${() => (this.tab = i)}>${t}</button>`)}
        <div class="arrows">
          <button aria-label="前へ"><svg viewBox="0 0 4 6"><path d="M4 0V6L1 3Z" fill="#999" /></svg></button>
          <button aria-label="次へ"><svg viewBox="0 0 4 6"><path d="M0 0V6L4 3Z" fill="#000" /></svg></button>
        </div>
      </nav>
      <footer>
        <span class="help">F1キーでヘルプが表示されます</span>
        <span class="w92">Default</span>
        <span class="w80">2026.03.31 09:00</span>
        <span class="w56">O: 159.601</span>
        <span class="w56">H: 159.729</span>
        <span class="w56">L: 159.483</span>
        <span class="w56">C: 159.715</span>
        <span class="w52">V: 6443</span>
        <span class="net">
          <svg class="signal" viewBox="0 0 19 11"><path d="M1.500 0v9M4.500 0v8M7.500 0v7M10.500 0v6M13.500 0v4M16.500 0v3" stroke="#6f7a35" stroke-width="2" /><path d="M1.500 10v1M4.500 9v2M7.500 8v3M10.500 7v4M13.500 5v6M16.500 4v7" stroke="#1f5a8c" stroke-width="2" /></svg>
          131238/27 kb
          <svg class="size" viewBox="0 0 11 12"><path d="M0 12L11 1M4 12L11 5M8 12L11 9" stroke="#999" /></svg>
        </span>
      </footer>`;
  }
}
